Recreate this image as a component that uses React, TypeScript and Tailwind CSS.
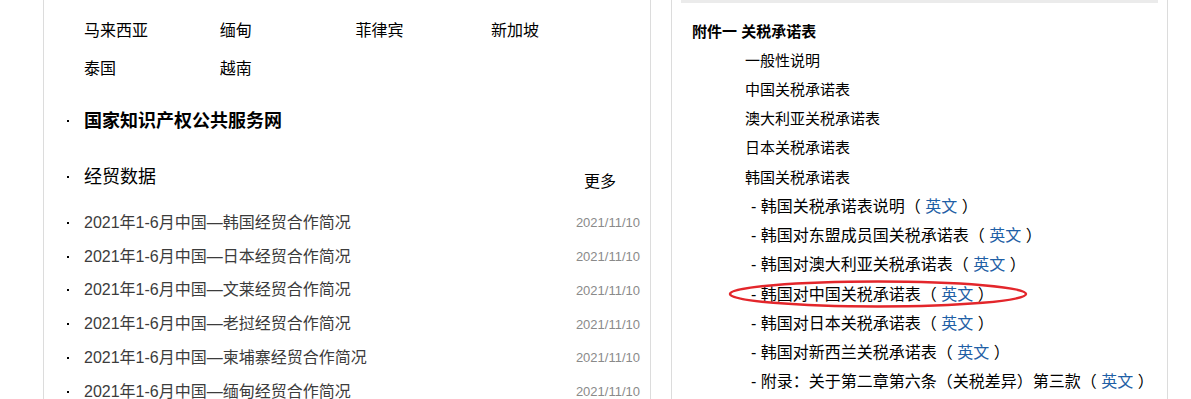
const countries = [["马来西亚", "缅甸", "菲律宾", "新加坡"], ["泰国", "越南"]];

const news = ["韩国", "日本", "文莱", "老挝", "柬埔寨", "缅甸"];

const plain = ["一般性说明", "中国关税承诺表", "澳大利亚关税承诺表", "日本关税承诺表", "韩国关税承诺表"];

const korea = [
  "韩国关税承诺表说明",
  "韩国对东盟成员国关税承诺表",
  "韩国对澳大利亚关税承诺表",
  "韩国对中国关税承诺表",
  "韩国对日本关税承诺表",
  "韩国对新西兰关税承诺表",
  "附录：关于第二章第六条（关税差异）第三款",
];

const Dot = () => <span className="absolute left-[-17px] top-1/2 h-[2px] w-[2px] -translate-y-1/2 bg-black" />;

export default function App() {
  return (
    <div className="flex h-[399px] w-[1191px] overflow-hidden bg-white font-['Liberation_Sans','Noto_Sans_CJK_SC',sans-serif]">
      <div className="ml-[43px] h-full w-[608px] shrink-0 border-x border-[#dcdcdc] pl-[40px] pr-[10px] pt-[12px]">
        {countries.map((row, i) => (
          <div key={i} className="flex h-[38px] items-center text-[16px] text-black">
            {row.map((c) => (
              <span key={c} className="w-[135.7px]">{c}</span>
            ))}
          </div>
        ))}
        <div className="relative mt-[21px] flex h-[24px] items-center text-[18px] font-bold text-black">
          <Dot />
          国家知识产权公共服务网
        </div>
        <div className="mt-[32px] flex h-[24px] items-center justify-between text-black">
          <span className="relative flex items-center text-[18px]">
            <Dot />
            经贸数据
          </span>
          <span className="mr-[24px] mt-[10px] text-[16px]">更多</span>
        </div>
        <div className="mt-[17px]">
          {news.map((n) => (
            <div key={n} className="flex h-[33.8px] items-center justify-between">
              <span className="relative flex items-center text-[16px] text-[#3c3c3c]">
                <Dot />
                2021年1-6月中国—{n}经贸合作简况
              </span>
              <span className="text-[13px] text-[#8a8a8a]">2021/11/10</span>
            </div>
          ))}
        </div>
      </div>

      <div className="relative ml-[20px] h-full w-[497px] shrink-0 border-x border-[#dcdcdc] px-[9px]">
        <div className="h-[3px] bg-[#ebebeb]" />
        <div className="pl-[11px] pt-[18px] text-[15px] font-bold leading-[22px] text-black">附件一 关税承诺表</div>
        <div className="mt-[2.5px] leading-[29.27px] text-black">
          {plain.map((p) => (
            <div key={p} className="pl-[64px] text-[15px]">{p}</div>
          ))}
          {korea.map((k) => (
            <div key={k} className="whitespace-nowrap pl-[70px] text-[16px]">
              - {k}（ <span className="text-[#1f5fa6]">英文</span> ）
            </div>
          ))}
        </div>
        <svg className="absolute left-[56px] top-[279px]" width="300" height="30" viewBox="0 0 300 30">
          <ellipse cx="150" cy="15" rx="148" ry="12.5" fill="none" stroke="#e3262b" strokeWidth="2.5" />
        </svg>
      </div>
    </div>
  );
}
